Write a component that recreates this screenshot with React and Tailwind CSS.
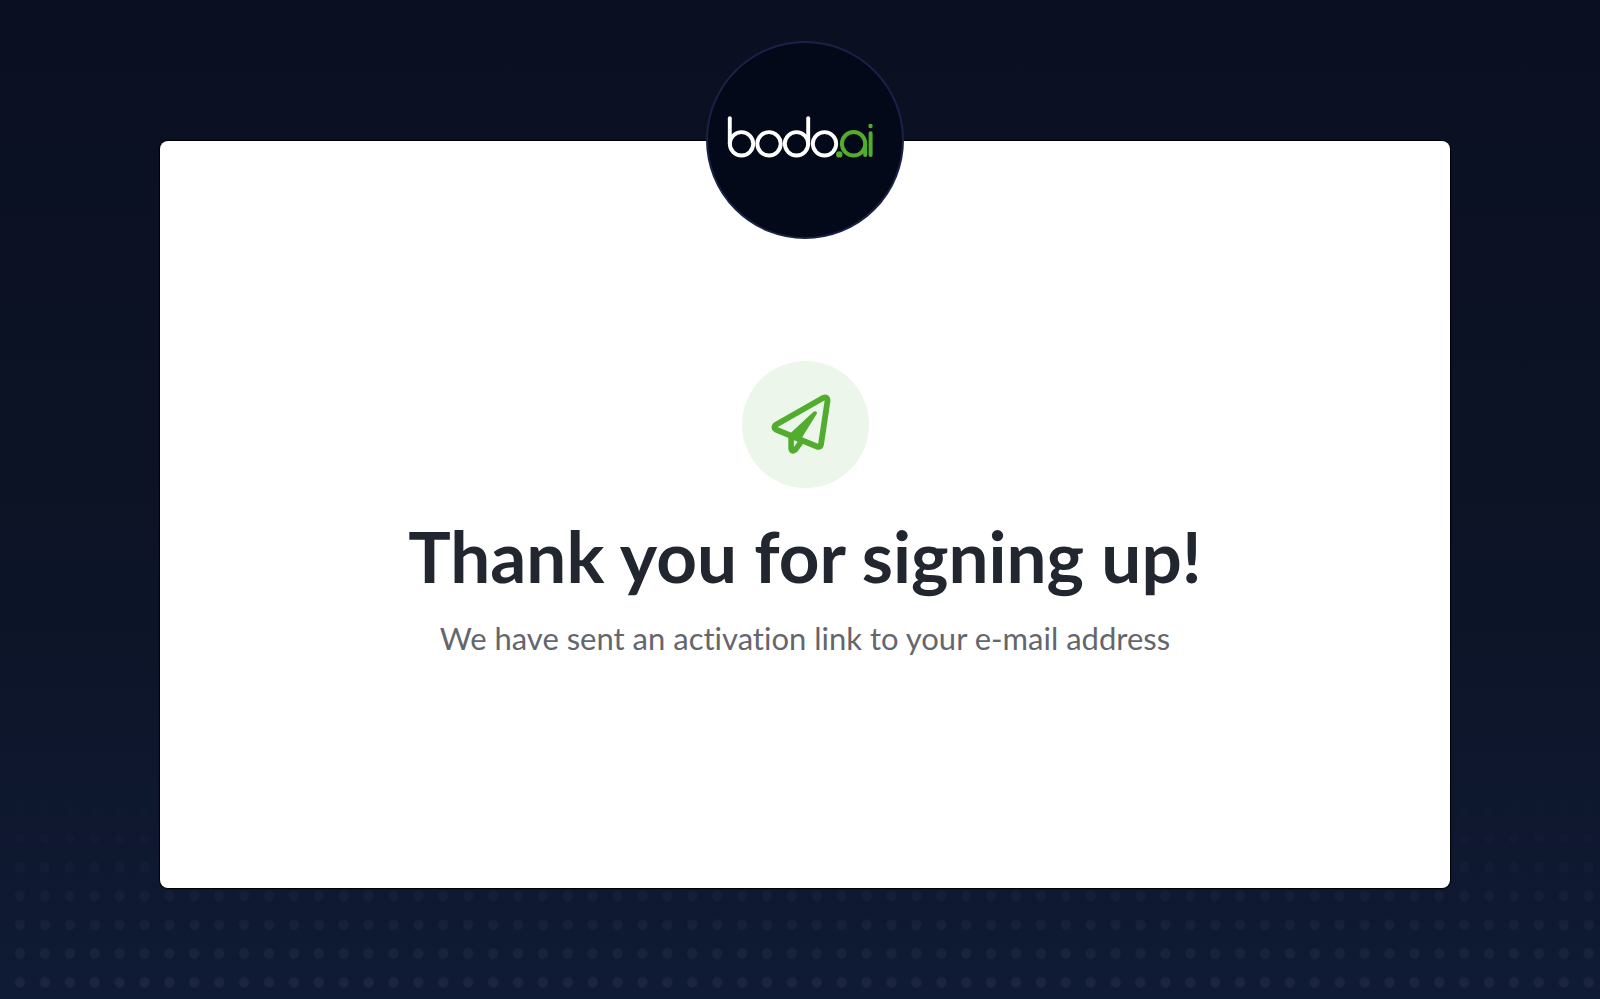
function BodoLogo() {
  return (
    <svg viewBox="0 0 170 70" className="h-[70px] w-[170px] shrink-0" fill="none" strokeLinecap="round" role="img" aria-label="bodo.ai">
      <g stroke="#ffffff" strokeWidth="3.9">
        <path d="M9.800 13.300v25.400" />
        <circle cx="21.500" cy="38.800" r="11.700" />
        <circle cx="49" cy="38.800" r="11.700" />
        <circle cx="76.500" cy="38.800" r="11.700" />
        <path d="M88.200 13.300v25.400" />
        <circle cx="104.500" cy="38.800" r="11.700" />
      </g>
      <g stroke="#52ad2f" strokeWidth="4">
        <circle cx="133.600" cy="38.800" r="11.700" />
        <path d="M145.200 39v11.100M150.600 28.200v21.900" />
      </g>
      <circle cx="119.300" cy="49.400" r="3.200" fill="#52ad2f" />
      <circle cx="150.500" cy="21" r="2.200" fill="#52ad2f" />
    </svg>
  );
}

function PaperPlane() {
  return (
    <svg viewBox="0 0 80 78" className="h-[78px] w-20" fill="none" aria-hidden="true">
      <g stroke="#52ad2f" strokeWidth="5.800" strokeLinejoin="round" strokeLinecap="round">
        <path d="M58.400 11.700 L10.500 39 Q8 41.400 10.800 43.500 L52.500 60.800 Q55.200 61.300 56 58.500 L62.600 14.300 Q62.300 10.500 58.400 11.700 Z" />
        <path d="M26.100 50.500v12q.7 4.200 4.300 1.200l6-8.400" strokeWidth="5.600" />
      </g>
      <path d="M48.800 25.500q2.800-1.200 3.300 1.800L35.500 54 23.500 49Z" fill="#52ad2f" />
    </svg>
  );
}

function DotBackdrop() {
  return (
    <svg className="absolute bottom-0 left-0 h-[240px] w-full" aria-hidden="true">
      <defs>
        <pattern id="dots" x="7.600" y="8" width="24.900" height="28.800" patternUnits="userSpaceOnUse">
          <ellipse cx="12.400" cy="13.700" rx="5.200" ry="5.600" fill="#8a8cb4" />
        </pattern>
        <linearGradient id="fade" x1="0" y1="0" x2="0" y2="1">
          <stop offset="0.100" stopColor="#ffffff" stopOpacity="0" />
          <stop offset="0.950" stopColor="#ffffff" stopOpacity="0.100" />
        </linearGradient>
        <mask id="dots-mask">
          <rect width="100%" height="100%" fill="url(#fade)" />
        </mask>
      </defs>
      <rect width="100%" height="100%" fill="url(#dots)" mask="url(#dots-mask)" />
    </svg>
  );
}

export default function App() {
  return (
    <div className="relative flex min-h-screen flex-col bg-linear-to-b from-[#0a1021] via-[#0c1325] to-[#0f1a34] pt-[141px] pr-[150px] pb-[111px] pl-40 font-['Lato',sans-serif] [font-variant-ligatures:none]">
      <DotBackdrop />
      <main className="relative flex grow flex-col items-center rounded-lg bg-white pt-[220px] shadow-[0_0_1px_1px_#000000]">
        <div className="absolute -top-[100px] left-1/2 flex size-[198px] -translate-x-1/2 items-center justify-center rounded-full border-2 border-[#1b2247] bg-[#040919]">
          <BodoLogo />
        </div>
        <div className="flex size-[127px] items-center justify-center rounded-full bg-[#edf6eb]">
          <PaperPlane />
        </div>
        <h1 className="mt-6 text-center text-[71px] leading-[88px] font-bold text-[#21262f]">
          Thank you for signing up!
        </h1>
        <p className="mt-[18px] text-center text-[31px] leading-10 text-[#64666e]">
          We have sent an activation link to your e-mail address
        </p>
      </main>
    </div>
  );
}
